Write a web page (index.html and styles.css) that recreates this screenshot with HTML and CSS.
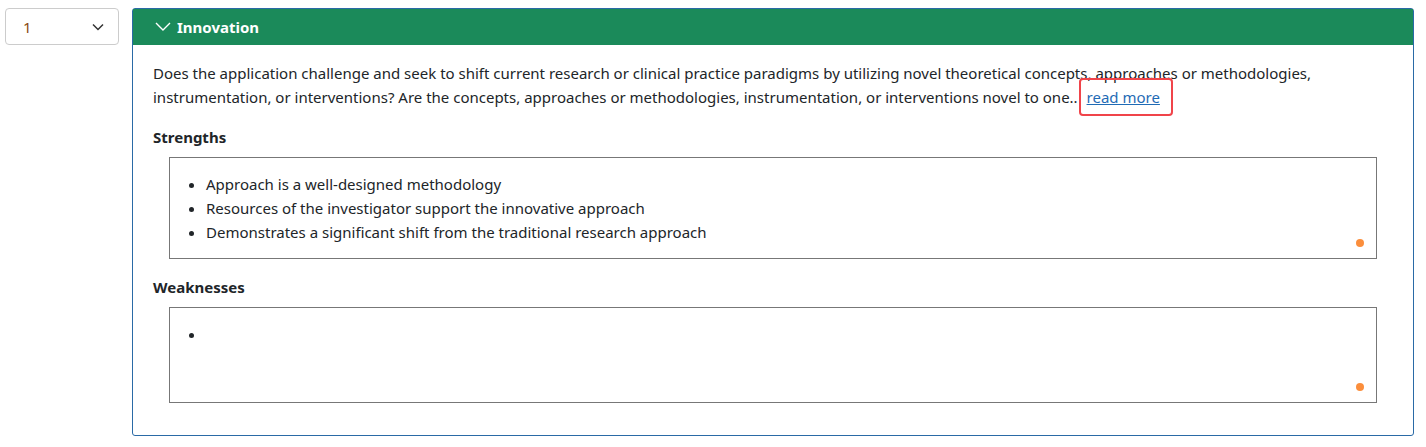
FILE: index.html
```html
<!DOCTYPE html>
<html lang="en">
<head>
    <meta charset="UTF-8">
    <title>Innovation</title>
    <link rel="stylesheet" href="styles.css">
</head>
<body>
    <div class="page">
        <div class="score">
            <span>1</span>
            <svg width="12" height="8" viewBox="0 0 12 8"><path d="M1 1.5 L6 6.5 L11 1.5" fill="none" stroke="#333" stroke-width="1.5"/></svg>
        </div>
        <div class="panel">
            <div class="panel-head">
                <svg width="16" height="10" viewBox="0 0 16 10"><path d="M1 1 L8 8 L15 1" fill="none" stroke="#fff" stroke-width="1.4"/></svg>
                <span>Innovation</span>
            </div>
            <div class="panel-body">
                <p class="question">Does the application challenge and seek to shift current research or clinical practice paradigms by utilizing novel theoretical concepts, approaches or methodologies, instrumentation, or interventions? Are the concepts, approaches or methodologies, instrumentation, or interventions novel to one.. <a href="#" class="more">read more</a></p>
                <h4>Strengths</h4>
                <div class="box">
                    <ul>
                        <li>Approach is a well-designed methodology</li>
                        <li>Resources of the investigator support the innovative approach</li>
                        <li>Demonstrates a significant shift from the traditional research approach</li>
                    </ul>
                    <span class="dot"></span>
                </div>
                <h4>Weaknesses</h4>
                <div class="box weak">
                    <ul>
                        <li></li>
                    </ul>
                    <span class="dot"></span>
                </div>
            </div>
        </div>
    </div>
</body>
</html>
```

FILE: styles.css
```css
body {
    margin: 0;
    font-family: "Noto Sans", sans-serif;
    font-size: 15px;
    color: #212529;
    background: #fff;
}
.page {
    display: flex;
    align-items: flex-start;
    padding: 8px 12px 0 5px;
}
.score {
    width: 114px;
    height: 37px;
    box-sizing: border-box;
    border: 1px solid #ccc;
    border-radius: 4px;
    display: flex;
    align-items: center;
    justify-content: space-between;
    padding: 0 14px 0 17px;
    color: #8a4b10;
    margin-right: 13px;
}
.panel {
    flex: 1;
    border: 1px solid #2a6aa6;
    border-radius: 3px;
    height: 428px;
    box-sizing: border-box;
}
.panel-head {
    background: #1b8a5a;
    color: #fff;
    font-weight: bold;
    height: 36px;
    display: flex;
    align-items: center;
    gap: 6px;
    padding-left: 22px;
}
.panel-body {
    padding: 16px 36px 0 20px;
}
.question {
    margin: 0;
    line-height: 24px;
}
.more {
    color: #1f6bb5;
    border: 2px solid #f0444a;
    border-radius: 4px;
    padding: 7px 11px 7px 6px;
    margin-left: -3px;
}
h4 {
    margin: 18px 0 10px;
    font-size: 15px;
}
.box {
    position: relative;
    margin-left: 16px;
    border: 1px solid #777;
    height: 102px;
    box-sizing: border-box;
    padding: 14px 0 0;
}
.box.weak {
    height: 96px;
}
.box ul {
    margin: 0;
    padding-left: 36px;
    line-height: 24px;
}
.dot {
    position: absolute;
    right: 12px;
    bottom: 11px;
    width: 8px;
    height: 8px;
    border-radius: 50%;
    background: #fb8e3c;
}
```
